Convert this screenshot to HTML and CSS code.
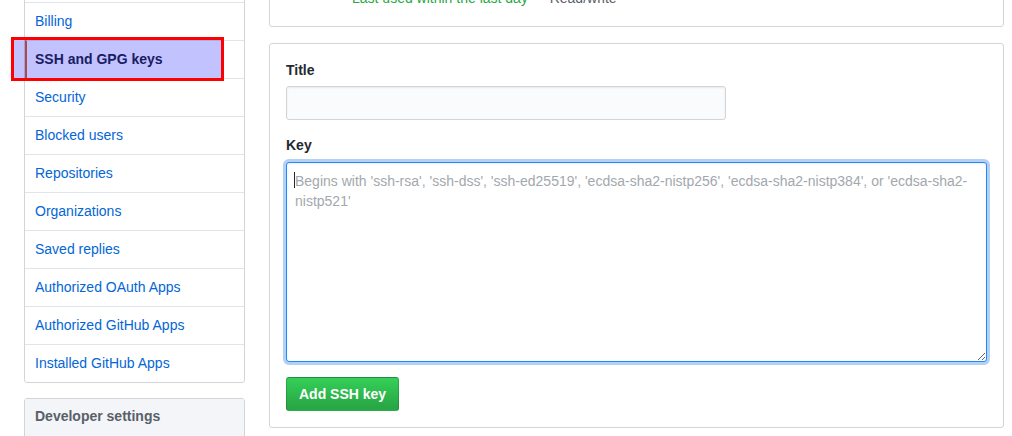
FILE: index.html
```html
<!DOCTYPE html>
<html>
<head>
<meta charset="utf-8">
<link rel="stylesheet" href="styles.css">
</head>
<body>
<div class="page">
  <aside class="side">
    <nav class="menu">
      <a class="menu-item">Emails</a>
      <a class="menu-item">Billing</a>
      <a class="menu-item selected">SSH and GPG keys</a>
      <a class="menu-item">Security</a>
      <a class="menu-item">Blocked users</a>
      <a class="menu-item">Repositories</a>
      <a class="menu-item">Organizations</a>
      <a class="menu-item">Saved replies</a>
      <a class="menu-item">Authorized OAuth Apps</a>
      <a class="menu-item">Authorized GitHub Apps</a>
      <a class="menu-item">Installed GitHub Apps</a>
    </nav>
    <nav class="menu dev">
      <h3 class="menu-heading">Developer settings</h3>
      <a class="menu-item">Personal access tokens</a>
    </nav>
  </aside>
  <main class="main">
    <div class="box top-box">
      <div class="key-meta"><span class="recent">Last used within the last day</span> — Read/write</div>
    </div>
    <form class="box form-box">
      <div class="form-group">
        <label class="label">Title</label>
        <input class="input" type="text">
      </div>
      <div class="form-group">
        <label class="label key-label">Key</label>
        <div class="field">
          <textarea class="input textarea focused" placeholder="Begins with 'ssh-rsa', 'ssh-dss', 'ssh-ed25519', 'ecdsa-sha2-nistp256', 'ecdsa-sha2-nistp384', or 'ecdsa-sha2-nistp521'"></textarea>
          <span class="caret"></span>
        </div>
      </div>
      <button class="btn-primary" type="button">Add SSH key</button>
    </form>
  </main>
</div>
<div class="highlight"></div>
</body>
</html>
```
FILE: styles.css
```css
* { box-sizing: border-box; }
html, body { margin: 0; padding: 0; }
body {
  font-family: "Liberation Sans", Arial, sans-serif;
  font-size: 14px;
  line-height: 1.5;
  color: #24292e;
  background: #fff;
  overflow: hidden;
  height: 436px;
}
.page {
  display: flex;
  align-items: flex-start;
  gap: 24px;
  margin-top: -36px;
  padding-left: 24px;
}
.side { width: 221px; flex: none; }
.menu {
  display: flex;
  flex-direction: column;
  border: 1px solid #d1d5da;
  border-radius: 3px;
  background: #fff;
}
.menu-item {
  display: block;
  padding: 8px 10px;
  line-height: 21px;
  color: #0366d6;
  border-top: 1px solid #e1e4e8;
  text-decoration: none;
}
.menu-item:first-child { border-top: 0; }
.menu-item.selected {
  font-weight: bold;
  color: #24292e;
  padding-left: 8px;
  border-left: 2px solid #e36209;
}
.dev {
  margin-top: 15px;
}
.menu-heading {
  margin: 0;
  padding: 7px 10px 9px;
  line-height: 21px;
  font-size: 14px;
  font-weight: bold;
  color: #586069;
  background: #f3f5f8;
  border-bottom: 1px solid #e1e4e8;
}
.main { width: 735px; flex: none; }
.box {
  border: 1px solid #d1d5da;
  border-radius: 3px;
  background: #fff;
}
.top-box {
  padding: 23px 16px 18px 82px;
}
.key-meta {
  line-height: 20px;
  color: #586069;
}
.recent { color: #28a745; }
.form-box {
  margin: 16px 0 0;
  padding: 16px;
}
.form-group { margin: 0 0 15px; }
.label {
  display: block;
  font-weight: bold;
  line-height: 20px;
  margin-bottom: 6px;
}
.key-label { margin-bottom: 7px; }
.field { position: relative; }
.input {
  display: block;
  width: 440px;
  height: 34px;
  padding: 6px 8px;
  font-family: inherit;
  font-size: 14px;
  line-height: 20px;
  color: #24292e;
  background: #fafbfc;
  border: 1px solid #d1d5da;
  border-radius: 3px;
  box-shadow: inset 0 1px 2px rgba(27,31,35,0.075);
  outline: none;
}
.textarea {
  width: 701px;
  height: 200px;
  padding: 8px;
  resize: vertical;
}
.textarea::placeholder { color: #a3a8ad; }
.textarea.focused {
  background: #fff;
  border-color: #2188ff;
  box-shadow: inset 0 1px 2px rgba(27,31,35,0.075), 0 0 0 3px rgba(3,102,214,0.3);
}
.caret {
  position: absolute;
  left: 8px;
  top: 10px;
  width: 1px;
  height: 16px;
  background: #24292e;
}
.btn-primary {
  display: block;
  padding: 6px 12px;
  font-family: inherit;
  font-size: 14px;
  font-weight: bold;
  line-height: 20px;
  color: #fff;
  background-image: linear-gradient(-180deg, #34d058 0%, #28a745 90%);
  border: 1px solid rgba(27,31,35,0.2);
  border-radius: 3px;
}
.highlight {
  position: absolute;
  left: 11px;
  top: 37px;
  width: 213px;
  height: 44px;
  border: 3px solid #ff0000;
  background: rgba(0, 0, 255, 0.24);
}
```
